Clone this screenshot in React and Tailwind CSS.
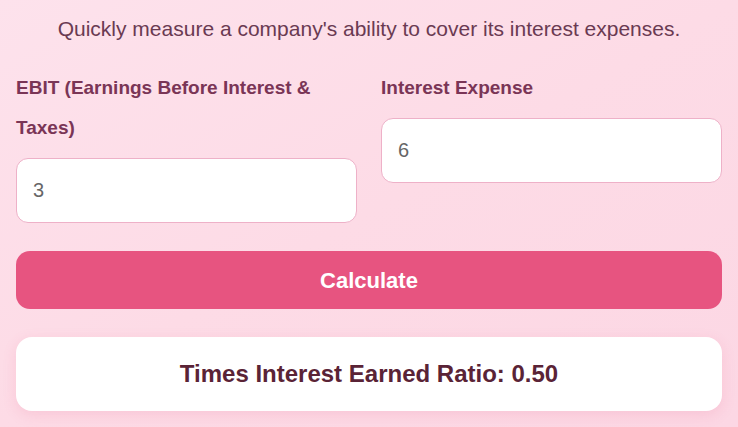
export default function App() {
  const font = { fontFamily: '"Liberation Sans", Arial, sans-serif' };
  return (
    <div
      className="min-h-[427px] w-full bg-gradient-to-br from-[#fde2ec] via-[#fddbe6] to-[#fcd7e4] px-4 pt-[13px]"
      style={font}
    >
      <p className="text-center text-[21px] leading-[32px] text-[#6a3a52]">
        Quickly measure a company's ability to cover its interest expenses.
      </p>

      <div className="mt-[23px] grid grid-cols-2 items-start gap-x-6">
        <div>
          <label className="mb-[10px] block text-[19px] font-bold leading-[40px] text-[#7a3556]">
            EBIT (Earnings Before Interest &amp; Taxes)
          </label>
          <input
            type="number"
            defaultValue="3"
            className="h-[65px] w-full rounded-xl border border-[#eeb1c8] bg-white px-4 text-[20px] text-[#666] outline-none"
          />
        </div>
        <div>
          <label className="mb-[10px] block text-[19px] font-bold leading-[40px] text-[#7a3556]">
            Interest Expense
          </label>
          <input
            type="number"
            defaultValue="6"
            className="h-[65px] w-full rounded-xl border border-[#eeb1c8] bg-white px-4 text-[20px] text-[#666] outline-none"
          />
        </div>
      </div>

      <button className="mt-[28px] flex h-[58px] w-full items-center justify-center rounded-[14px] bg-[#e75480] text-[22px] font-bold text-white">
        Calculate
      </button>

      <div className="mt-[28px] flex h-[74px] items-center justify-center rounded-2xl bg-white shadow-[0_4px_14px_rgba(231,84,128,0.15)]">
        <h3 className="text-[24px] font-bold text-[#5a2336]">
          Times Interest Earned Ratio: 0.50
        </h3>
      </div>
    </div>
  );
}
